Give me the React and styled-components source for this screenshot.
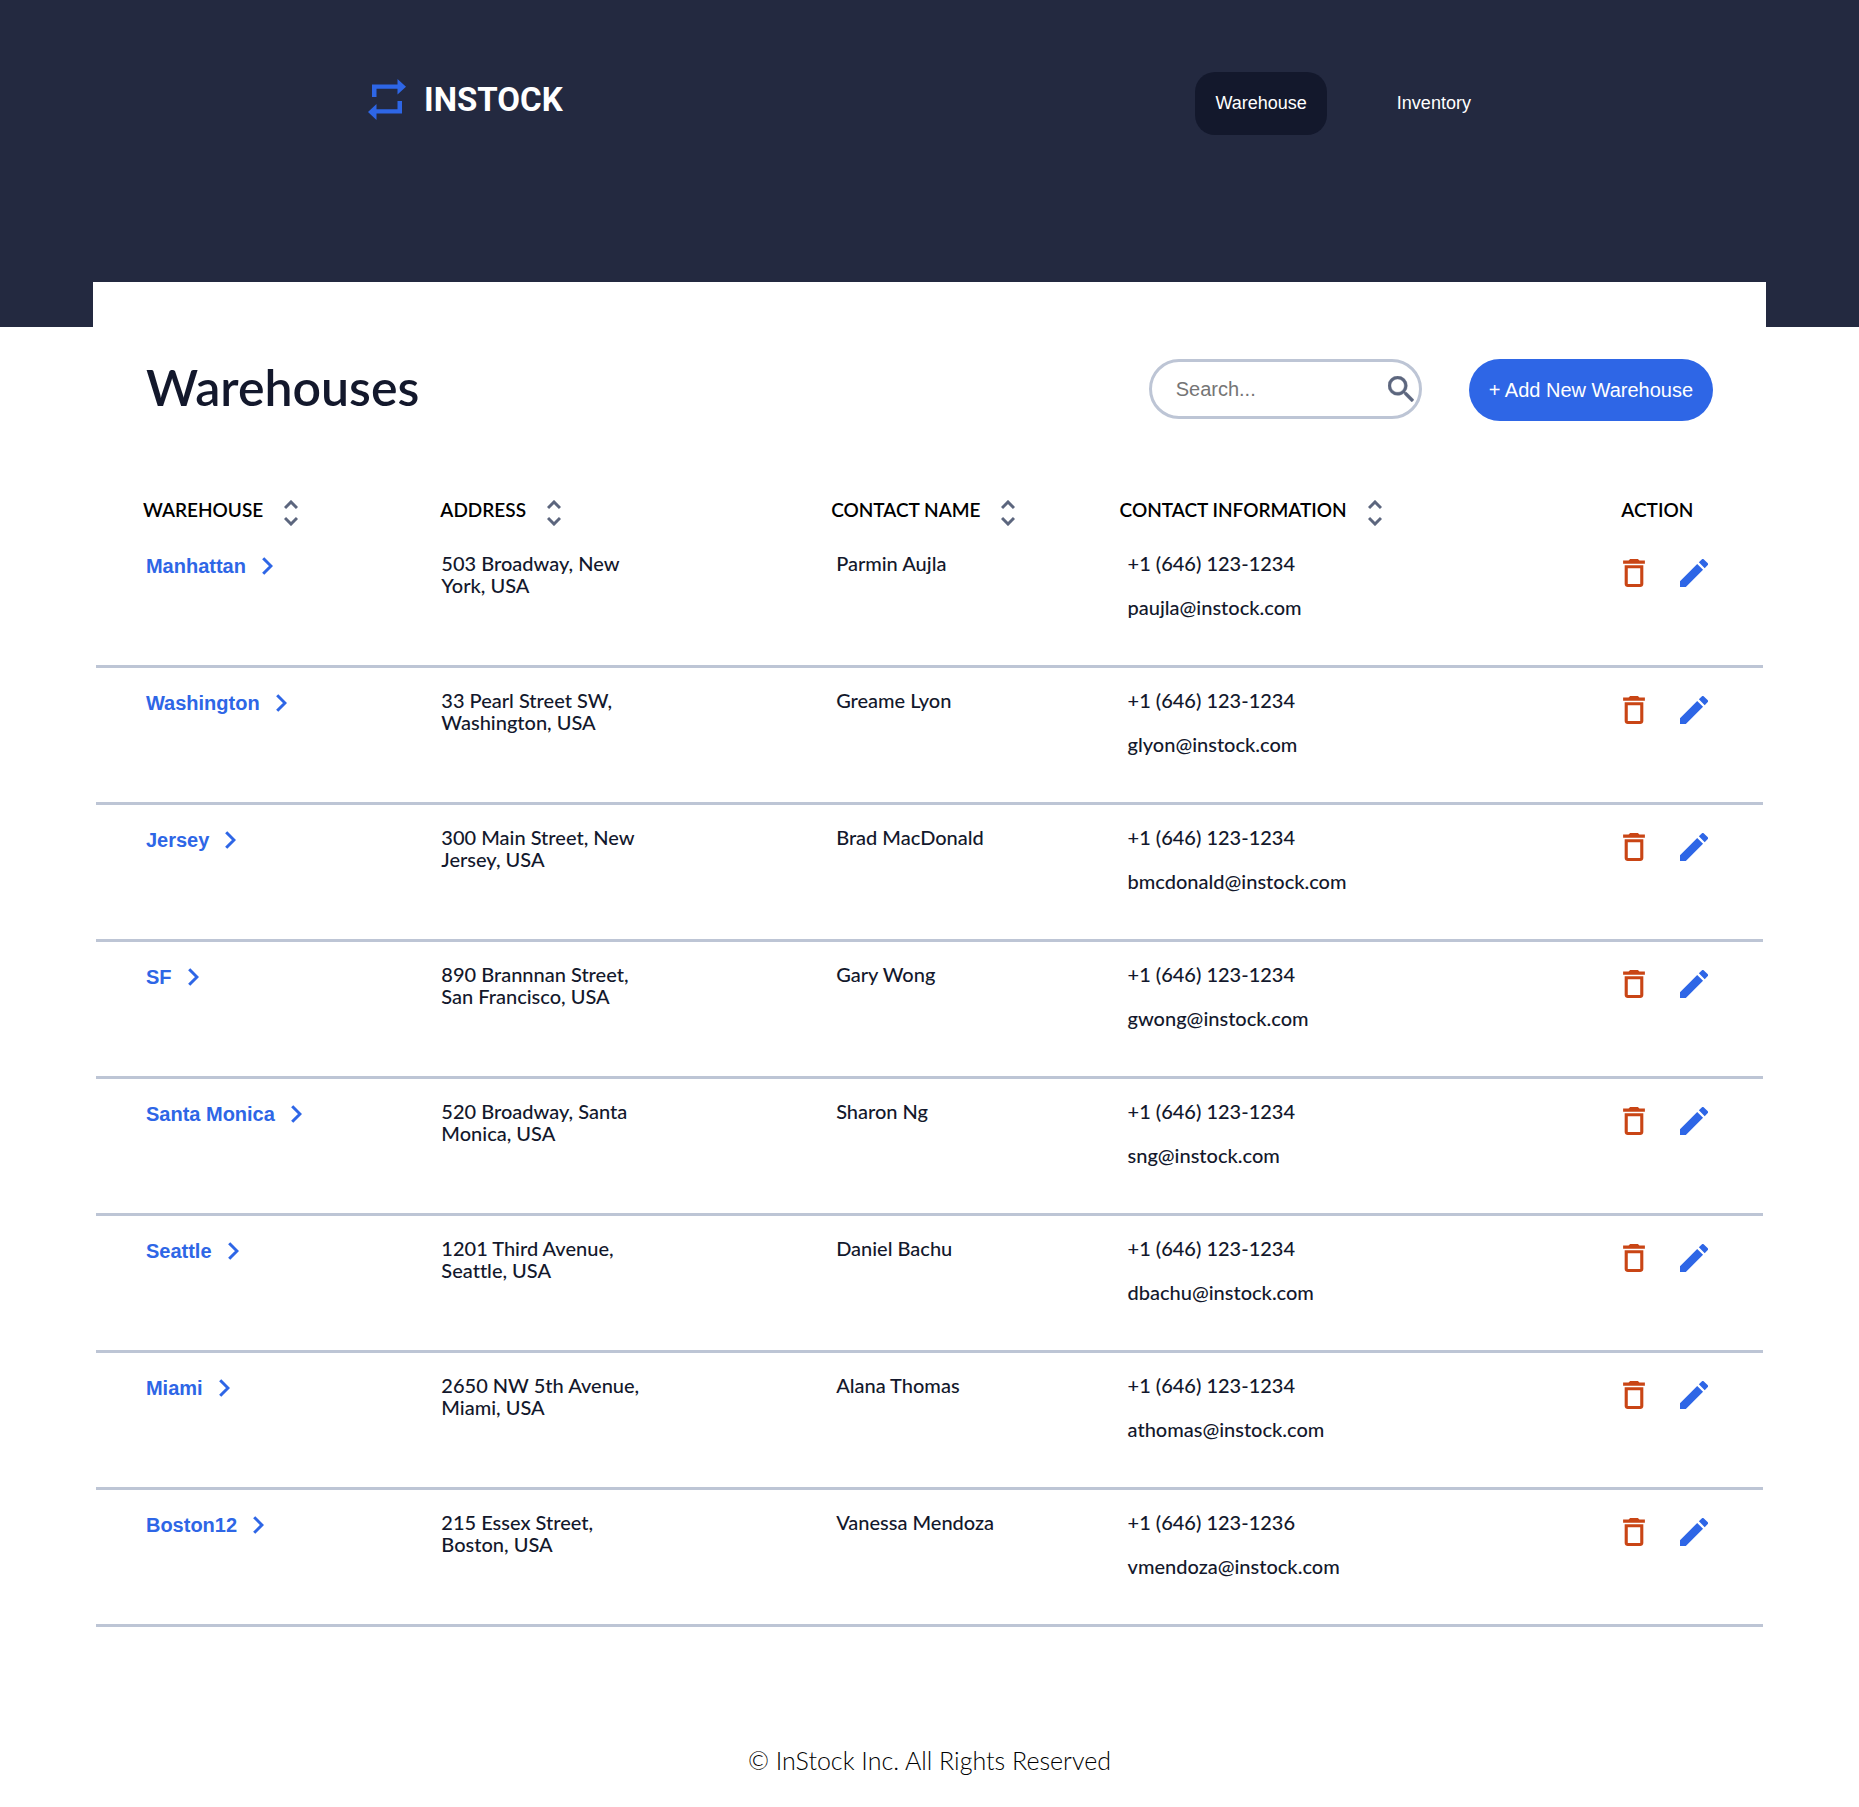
import React, { useState } from "react";
import styled, { createGlobalStyle } from "styled-components";

const color = {
  ink: "#13182c",
  graphite: "#232940",
  slate: "#5c667e",
  cloud: "#bdc5d5",
  indigo: "#2e66e6",
  red: "#c94515",
};

const text = `Lato, "Open Sans", sans-serif`;
const ui = `"Liberation Sans", Arial, sans-serif`;

const GlobalStyle = createGlobalStyle`
  *, *::before, *::after { box-sizing: border-box; }
  body {
    margin: 0;
    background: #fff;
    color: ${color.ink};
    font-family: ${text};
    font-variant-ligatures: none;
  }
  button, input { font-family: ${ui}; }
`;

const Header = styled.header`
  height: 327px;
  padding-top: 72px;
  background: ${color.graphite};
`;

const HeaderInner = styled.div`
  display: flex;
  align-items: flex-start;
  justify-content: space-between;
  width: 60.4%;
  margin: 0 auto;
`;

const Logo = styled.a`
  display: flex;
  align-items: center;
  gap: 18px;
  color: #fff;
  font: 700 33px/55px Roboto, sans-serif;
  text-decoration: none;
`;

const Nav = styled.nav`
  display: flex;
  gap: 50px;
`;

const NavLink = styled.a`
  padding: 20px;
  border-radius: 20px;
  background: ${(p) => (p.$active ? color.ink : "transparent")};
  color: #fff;
  font: 18px/23px ${ui};
  text-decoration: none;
`;

const Card = styled.main`
  width: 90%;
  margin: -45px auto 0;
  padding: 77px 3px 0;
  background: #fff;
`;

const TitleBar = styled.div`
  display: flex;
  align-items: flex-start;
  justify-content: space-between;
  height: 62px;
  padding: 0 50px;
`;

const Title = styled.h1`
  margin: 0;
  font-size: 50px;
  line-height: 56px;
  font-weight: 600;
`;

const Tools = styled.div`
  display: flex;
  align-items: flex-start;
  gap: 47px;
`;

const SearchBox = styled.label`
  display: flex;
  align-items: center;
  width: 273px;
  height: 60px;
  padding: 0 5px 0 24px;
  border: 3px solid ${color.cloud};
  border-radius: 30px;
`;

const SearchInput = styled.input`
  flex: 1;
  min-width: 0;
  padding: 0;
  border: 0;
  outline: 0;
  background: transparent;
  font-size: 20px;
  &::placeholder { color: #757575; }
`;

const AddButton = styled.button`
  height: 62px;
  padding: 0 20px;
  border: 0;
  border-radius: 31px;
  background: ${color.indigo};
  color: #fff;
  font-size: 20px;
  cursor: pointer;
`;

const Table = styled.table`
  width: 100%;
  margin-top: 68px;
  border-collapse: separate;
  border-spacing: 0;
  table-layout: fixed;
`;

const Col = styled.col`
  width: ${(p) => p.$width};
`;

const HeadCell = styled.th`
  height: 42px;
  padding: 0 0 0 ${(p) => p.$indent}px;
  color: #000;
  font-size: 19px;
  line-height: 22px;
  font-weight: 600;
  text-align: left;
  vertical-align: top;
`;

const HeadContent = styled.div`
  display: flex;
  align-items: center;
  gap: 21px;
  height: 42px;
`;

const SortButton = styled.button`
  display: flex;
  padding: 5px 0 0;
  border: 0;
  background: none;
  cursor: pointer;
`;

const Cell = styled.td`
  height: 137px;
  padding: 21px 0 0 ${(p) => p.$indent}px;
  border-bottom: 3px solid ${color.cloud};
  font-size: 20px;
  line-height: 22px;
  font-weight: 500;
  vertical-align: top;
`;

const WarehouseLink = styled.a`
  display: inline-flex;
  align-items: center;
  gap: 16px;
  color: ${color.indigo};
  font: 700 20px/28px ${ui};
  text-decoration: none;
`;

const Address = styled.div`
  max-width: 208px;
`;

const Contact = styled.div`
  display: grid;
  gap: 22px;
`;

const Actions = styled.div`
  display: flex;
  gap: 35px;
  padding-top: 7px;
`;

const IconButton = styled.button`
  display: flex;
  padding: 0;
  border: 0;
  background: none;
  cursor: pointer;
`;

const Footer = styled.footer`
  padding: 118px 0 32px;
  color: #000;
  font-size: 25px;
  line-height: 30px;
  font-weight: 300;
  text-align: center;
`;

const LogoIcon = () => (
  <svg width="38" height="41" viewBox="0 0 38 41" fill={color.indigo} aria-hidden="true">
    <path d="M4 18V5.500h25.500V0L38 7.700l-8.500 7.800V9.800H8.500V18z" />
    <path d="M34 22v12.500H8.500V41L0 33l8.500-8v5.300h21V22z" />
  </svg>
);

const SearchIcon = () => (
  <svg width="26" height="26" viewBox="3 3 17.500 17.500" fill={color.slate} stroke={color.slate} strokeWidth="0.300" aria-hidden="true">
    <path d="M15.500 14h-.79l-.28-.27A6.471 6.471 0 0 0 16 9.500 6.500 6.500 0 1 0 9.500 16c1.610 0 3.090-.59 4.230-1.570l.27.28v.79l5 4.990L20.490 19l-4.990-5zm-6 0C7.010 14 5 11.990 5 9.500S7.010 5 9.500 5 14 7.010 14 9.500 11.990 14 9.500 14z" />
  </svg>
);

const SortIcon = () => (
  <svg width="14" height="26" viewBox="0 0 14 26" fill="none" stroke={color.slate} strokeWidth="3" aria-hidden="true">
    <path d="M1 8l6-6 6 6M1 18l6 6 6-6" />
  </svg>
);

const ChevronIcon = () => (
  <svg width="11" height="18" viewBox="0 0 11 18" fill="none" stroke={color.indigo} strokeWidth="3" aria-hidden="true">
    <path d="M1.200 1.200L9 9l-7.800 7.800" />
  </svg>
);

const TrashIcon = () => (
  <svg width="22" height="28" viewBox="5 3 14 18" fill={color.red} aria-hidden="true">
    <path d="M6 19c0 1.100.9 2 2 2h8c1.100 0 2-.9 2-2V7H6v12zM8 9h8v10H8V9zm7.500-5l-1-1h-5l-1 1H5v2h14V4h-3.500z" />
  </svg>
);

const EditIcon = () => (
  <svg width="28" height="28" viewBox="3 3 18 18" fill={color.indigo} aria-hidden="true">
    <path d="M3 17.250V21h3.750L17.810 9.940l-3.750-3.750L3 17.250zM20.710 7.040a.996.996 0 0 0 0-1.410l-2.340-2.340a.996.996 0 0 0-1.410 0l-1.830 1.830 3.750 3.750 1.830-1.830z" />
  </svg>
);

const columns = [
  { title: "WAREHOUSE", width: "20.6%", indent: 47, sortable: true },
  { title: "ADDRESS", width: "23.5%", indent: 1, sortable: true },
  { title: "CONTACT NAME", width: "17.3%", indent: 0, sortable: true },
  { title: "CONTACT INFORMATION", width: "30.1%", indent: 0, sortable: true },
  { title: "ACTION", width: "8.5%", indent: 0, sortable: false },
];

const warehouses = [
  ["Manhattan", "503 Broadway, New York, USA", "Parmin Aujla", "+1 (646) 123-1234", "paujla@instock.com"],
  ["Washington", "33 Pearl Street SW, Washington, USA", "Greame Lyon", "+1 (646) 123-1234", "glyon@instock.com"],
  ["Jersey", "300 Main Street, New Jersey, USA", "Brad MacDonald", "+1 (646) 123-1234", "bmcdonald@instock.com"],
  ["SF", "890 Brannnan Street, San Francisco, USA", "Gary Wong", "+1 (646) 123-1234", "gwong@instock.com"],
  ["Santa Monica", "520 Broadway, Santa Monica, USA", "Sharon Ng", "+1 (646) 123-1234", "sng@instock.com"],
  ["Seattle", "1201 Third Avenue, Seattle, USA", "Daniel Bachu", "+1 (646) 123-1234", "dbachu@instock.com"],
  ["Miami", "2650 NW 5th Avenue, Miami, USA", "Alana Thomas", "+1 (646) 123-1234", "athomas@instock.com"],
  ["Boston12", "215 Essex Street, Boston, USA", "Vanessa Mendoza", "+1 (646) 123-1236", "vmendoza@instock.com"],
];

function WarehouseRow({ row }) {
  const [name, address, contact, phone, email] = row;
  return (
    <tr>
      <Cell $indent={50}>
        <WarehouseLink href="#">
          {name}
          <ChevronIcon />
        </WarehouseLink>
      </Cell>
      <Cell $indent={2}>
        <Address>{address}</Address>
      </Cell>
      <Cell $indent={5}>{contact}</Cell>
      <Cell $indent={8}>
        <Contact>
          <span>{phone}</span>
          <span>{email}</span>
        </Contact>
      </Cell>
      <Cell $indent={2}>
        <Actions>
          <IconButton type="button" aria-label={`Delete ${name}`}>
            <TrashIcon />
          </IconButton>
          <IconButton type="button" aria-label={`Edit ${name}`}>
            <EditIcon />
          </IconButton>
        </Actions>
      </Cell>
    </tr>
  );
}

export default function App() {
  const [query, setQuery] = useState("");
  const rows = warehouses.filter((r) => r.join(" ").toLowerCase().includes(query.toLowerCase()));
  return (
    <>
      <GlobalStyle />
      <Header>
        <HeaderInner>
          <Logo href="#">
            <LogoIcon />
            INSTOCK
          </Logo>
          <Nav>
            <NavLink href="#" $active>Warehouse</NavLink>
            <NavLink href="#">Inventory</NavLink>
          </Nav>
        </HeaderInner>
      </Header>
      <Card>
        <TitleBar>
          <Title>Warehouses</Title>
          <Tools>
            <SearchBox>
              <SearchInput
                type="text"
                aria-label="Search"
                placeholder="Search..."
                value={query}
                onChange={(e) => setQuery(e.target.value)}
              />
              <SearchIcon />
            </SearchBox>
            <AddButton type="button">+ Add New Warehouse</AddButton>
          </Tools>
        </TitleBar>
        <Table>
          <colgroup>
            {columns.map((c) => (
              <Col key={c.title} $width={c.width} />
            ))}
          </colgroup>
          <thead>
            <tr>
              {columns.map((c) => (
                <HeadCell key={c.title} scope="col" $indent={c.indent}>
                  <HeadContent>
                    {c.title}
                    {c.sortable && (
                      <SortButton type="button" aria-label={`Sort by ${c.title.toLowerCase()}`}>
                        <SortIcon />
                      </SortButton>
                    )}
                  </HeadContent>
                </HeadCell>
              ))}
            </tr>
          </thead>
          <tbody>
            {rows.map((r) => (
              <WarehouseRow key={r[0]} row={r} />
            ))}
          </tbody>
        </Table>
      </Card>
      <Footer>© InStock Inc. All Rights Reserved</Footer>
    </>
  );
}
